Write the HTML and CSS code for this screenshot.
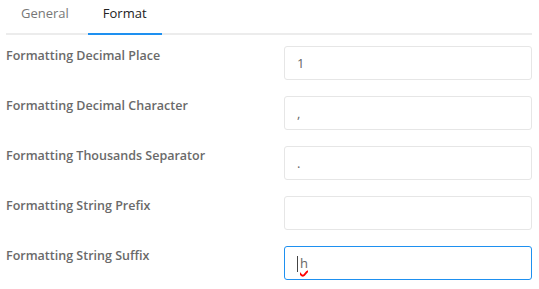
FILE: index.html
```html
<!DOCTYPE html>
<html lang="en">
<head>
    <meta charset="UTF-8">
    <meta name="viewport" content="width=device-width, initial-scale=1.0">
    <title>Format</title>
    <link rel="stylesheet" href="styles.css">
</head>
<body>
    <div class="panel">
        <div class="tabs">
            <div class="tab">General</div>
            <div class="tab active">Format</div>
        </div>
        <form class="form">
            <div class="row">
                <label for="place">Formatting Decimal Place</label>
                <input type="text" id="place" value="1">
            </div>
            <div class="row">
                <label for="decimal">Formatting Decimal Character</label>
                <input type="text" id="decimal" value=",">
            </div>
            <div class="row">
                <label for="thousands">Formatting Thousands Separator</label>
                <input type="text" id="thousands" value=".">
            </div>
            <div class="row">
                <label for="prefix">Formatting String Prefix</label>
                <input type="text" id="prefix" value="">
            </div>
            <div class="row">
                <label>Formatting String Suffix</label>
                <div class="field focused"><span class="caret"></span><span class="misspelt">h</span></div>
            </div>
        </form>
    </div>
</body>
</html>
```

FILE: styles.css
```css
body {
    font-family: "Open Sans", "Noto Sans", sans-serif;
    margin: 0;
    padding: 0;
    background-color: #fff;
}
.panel {
    width: 526px;
    padding-left: 6px;
}
.tabs {
    display: flex;
    gap: 4px;
    border-bottom: 2px solid #ececec;
    height: 33px;
}
.tab {
    padding: 0 15px;
    font-size: 13px;
    line-height: 27px;
    color: #777;
    margin-bottom: -2px;
    border-bottom: 2px solid transparent;
}
.tab.active {
    color: #222;
    border-bottom-color: #1e90f0;
    height: 33px;
}
.form {
    display: flex;
    flex-direction: column;
    gap: 16px;
    margin-top: 11px;
}
.row {
    display: flex;
    align-items: flex-start;
}
label {
    flex: 0 0 278px;
    font-size: 12.5px;
    font-weight: 600;
    color: #6a6a6a;
    line-height: 19px;
}
input, .field {
    box-sizing: border-box;
    width: 248px;
    height: 34px;
    padding: 0 12px;
    border: 1px solid #e6e6e6;
    border-radius: 3px;
    font-family: inherit;
    font-size: 13px;
    color: #666;
    outline: none;
}
.field {
    display: flex;
    align-items: center;
}
.field.focused {
    border-color: #1e90f0;
}
.caret {
    width: 1px;
    height: 16px;
    margin-top: 2px;
    background-color: #444;
    margin-right: 2px;
}
.misspelt {
    text-decoration: underline wavy #f00;
    text-decoration-thickness: 1.5px;
    text-underline-offset: 2px;
}
```
